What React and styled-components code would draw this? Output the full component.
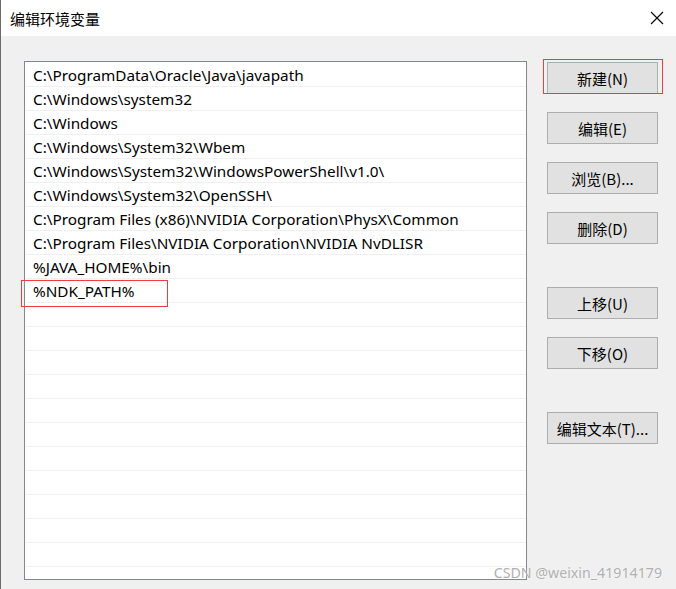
import React from "react";
import styled, { createGlobalStyle } from "styled-components";

const Global = createGlobalStyle`
  html, body { margin: 0; padding: 0; background: #f0f0f0; }
  body { font-family: "Noto Sans CJK SC", "Noto Sans", sans-serif; }
`;

const Window = styled.div`
  width: 676px;
  height: 589px;
  box-sizing: border-box;
  border-left: 1px solid #6b6b6b;
  background: #f0f0f0;
  display: flex;
  flex-direction: column;
  position: relative;
  overflow: hidden;
`;

const TitleBar = styled.div`
  height: 36px;
  background: #ffffff;
  display: flex;
  align-items: center;
  justify-content: space-between;
  padding: 0 12px 0 9px;
  color: #000;
  font-size: 15px;
`;

const Body = styled.div`
  flex: 1;
  display: flex;
  padding: 25px 18px 0 23px;
  gap: 20px;
`;

const List = styled.div`
  width: 503px;
  height: 519px;
  box-sizing: border-box;
  border: 1px solid #828790;
  background: #fff;
  padding: 1px 0 0 1px;
  display: flex;
  flex-direction: column;
`;

const Row = styled.div`
  height: 24px;
  box-sizing: border-box;
  border-bottom: 1px solid #f0f0f0;
  padding-left: 7px;
  display: flex;
  align-items: center;
  font-family: "Noto Sans", "Noto Sans CJK SC", sans-serif;
  font-size: 15.3px;
  color: #000;
  white-space: nowrap;
  position: relative;
`;

const Highlight = styled.span`
  position: absolute;
  left: -5px;
  top: 1px;
  width: 147px;
  height: 27px;
  box-sizing: border-box;
  border: 1px solid #f03c3c;
  pointer-events: none;
`;

const Buttons = styled.div`
  display: flex;
  flex-direction: column;
  padding-top: 1px;
`;

const Button = styled.div`
  width: 111px;
  height: 32px;
  box-sizing: border-box;
  border: 1px solid #adadad;
  background: #e1e1e1;
  display: flex;
  align-items: center;
  justify-content: center;
  font-size: 15px;
  color: #000;
  margin-top: ${(p) => p.$gap || 0}px;
  position: relative;
`;

const Mark = styled.span`
  position: absolute;
  left: -5px;
  right: -6px;
  top: -4px;
  bottom: -1px;
  border: 1px solid #f03c3c;
  pointer-events: none;
`;

const Watermark = styled.div`
  position: absolute;
  right: 14px;
  bottom: 7px;
  font-family: "Noto Sans", sans-serif;
  font-size: 14.2px;
  color: #b0b0b0;
  text-shadow: 0 0 2px #fff;
`;

const paths = [
  "C:\\ProgramData\\Oracle\\Java\\javapath",
  "C:\\Windows\\system32",
  "C:\\Windows",
  "C:\\Windows\\System32\\Wbem",
  "C:\\Windows\\System32\\WindowsPowerShell\\v1.0\\",
  "C:\\Windows\\System32\\OpenSSH\\",
  "C:\\Program Files (x86)\\NVIDIA Corporation\\PhysX\\Common",
  "C:\\Program Files\\NVIDIA Corporation\\NVIDIA NvDLISR",
  "%JAVA_HOME%\\bin",
  "%NDK_PATH%",
];

const rows = [...paths, ...Array(11).fill("")];

export default function App() {
  return (
    <Window>
      <Global />
      <TitleBar>
        <span>编辑环境变量</span>
        <svg width="14" height="14" viewBox="0 0 14 14">
          <path d="M1 1L13 13M13 1L1 13" stroke="#000" strokeWidth="1.1" />
        </svg>
      </TitleBar>
      <Body>
        <List>
          {rows.map((r, i) => (
            <Row key={i}>
              {r === "%NDK_PATH%" && <Highlight />}
              {r}
            </Row>
          ))}
        </List>
        <Buttons>
          <Button>
            <Mark />
            新建(N)
          </Button>
          <Button $gap={18}>编辑(E)</Button>
          <Button $gap={18}>浏览(B)...</Button>
          <Button $gap={18}>删除(D)</Button>
          <Button $gap={43}>上移(U)</Button>
          <Button $gap={18}>下移(O)</Button>
          <Button $gap={43}>编辑文本(T)...</Button>
        </Buttons>
      </Body>
      <Watermark>CSDN @weixin_41914179</Watermark>
    </Window>
  );
}
